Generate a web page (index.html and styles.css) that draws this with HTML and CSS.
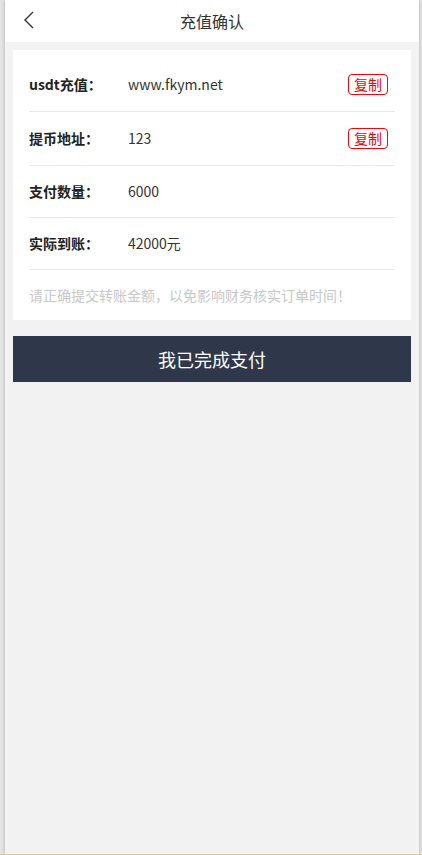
FILE: index.html
```html
<!DOCTYPE html>
<html lang="zh-CN">
<head>
<meta charset="utf-8">
<meta name="viewport" content="width=device-width, initial-scale=1">
<title>充值确认</title>
<link rel="stylesheet" href="styles.css">
</head>
<body>
<div class="page">
  <header class="topbar">
    <span class="back">
      <svg width="12" height="18" viewBox="0 0 12 18"><polyline points="10,1 2,9 10,17" fill="none" stroke="#333" stroke-width="1.4"/></svg>
    </span>
    <h1 class="title">充值确认</h1>
  </header>
  <section class="card">
    <div class="row">
      <span class="label">usdt充值：</span>
      <span class="value">www.fkym.net</span>
      <span class="copy">复制</span>
    </div>
    <div class="row">
      <span class="label">提币地址：</span>
      <span class="value">123</span>
      <span class="copy">复制</span>
    </div>
    <div class="row">
      <span class="label">支付数量：</span>
      <span class="value">6000</span>
    </div>
    <div class="row">
      <span class="label">实际到账：</span>
      <span class="value">42000元</span>
    </div>
    <p class="note">请正确提交转账金额，以免影响财务核实订单时间！</p>
  </section>
  <button class="submit">我已完成支付</button>
</div>
</body>
</html>
```

FILE: styles.css
```css
html, body {
  margin: 0;
  padding: 0;
}
body {
  background: #e6e6e6;
  font-family: "Microsoft YaHei", "Noto Sans CJK SC", "Noto Sans", sans-serif;
  height: 854px;
  border-bottom: 1px solid #dcc78f;
  overflow: hidden;
}
.page {
  width: 414px;
  margin-left: 5px;
  height: 854px;
  background: #f2f2f2;
  box-shadow: 0 0 4px rgba(0, 0, 0, 0.25);
}
.topbar {
  height: 42px;
  background: #fff;
  display: flex;
  align-items: center;
  justify-content: center;
  position: relative;
}
.back {
  position: absolute;
  left: 18px;
  top: 11px;
  width: 12px;
  height: 18px;
  display: flex;
}
.title {
  margin: 0;
  font-size: 16px;
  font-weight: normal;
  color: #333;
}
.card {
  margin: 8px 8px 0;
  background: #fff;
  padding: 8px 16px 0;
}
.row {
  display: flex;
  align-items: center;
  padding: 15px 0;
  border-bottom: 1px solid #e8e8e8;
  font-size: 14px;
  line-height: 21px;
}
.label {
  width: 99px;
  font-weight: bold;
  color: #222;
}
.value {
  flex: 1;
  color: #333;
}
.copy {
  box-sizing: border-box;
  height: 21px;
  line-height: 19px;
  margin: 1px 7px 1px 0;
  padding: 0 5px;
  border: 1px solid #f00;
  border-radius: 4px;
  color: #f00;
  font-size: 14px;
}
.note {
  margin: 0;
  padding: 15px 0;
  font-size: 14px;
  line-height: 20px;
  color: #c8c8c8;
}
.submit {
  display: block;
  box-sizing: border-box;
  width: 398px;
  height: 46px;
  margin: 16px 8px 0;
  border: 0;
  background: #2f384a;
  color: #fff;
  font-family: inherit;
  font-size: 18px;
  padding: 0;
}
```
